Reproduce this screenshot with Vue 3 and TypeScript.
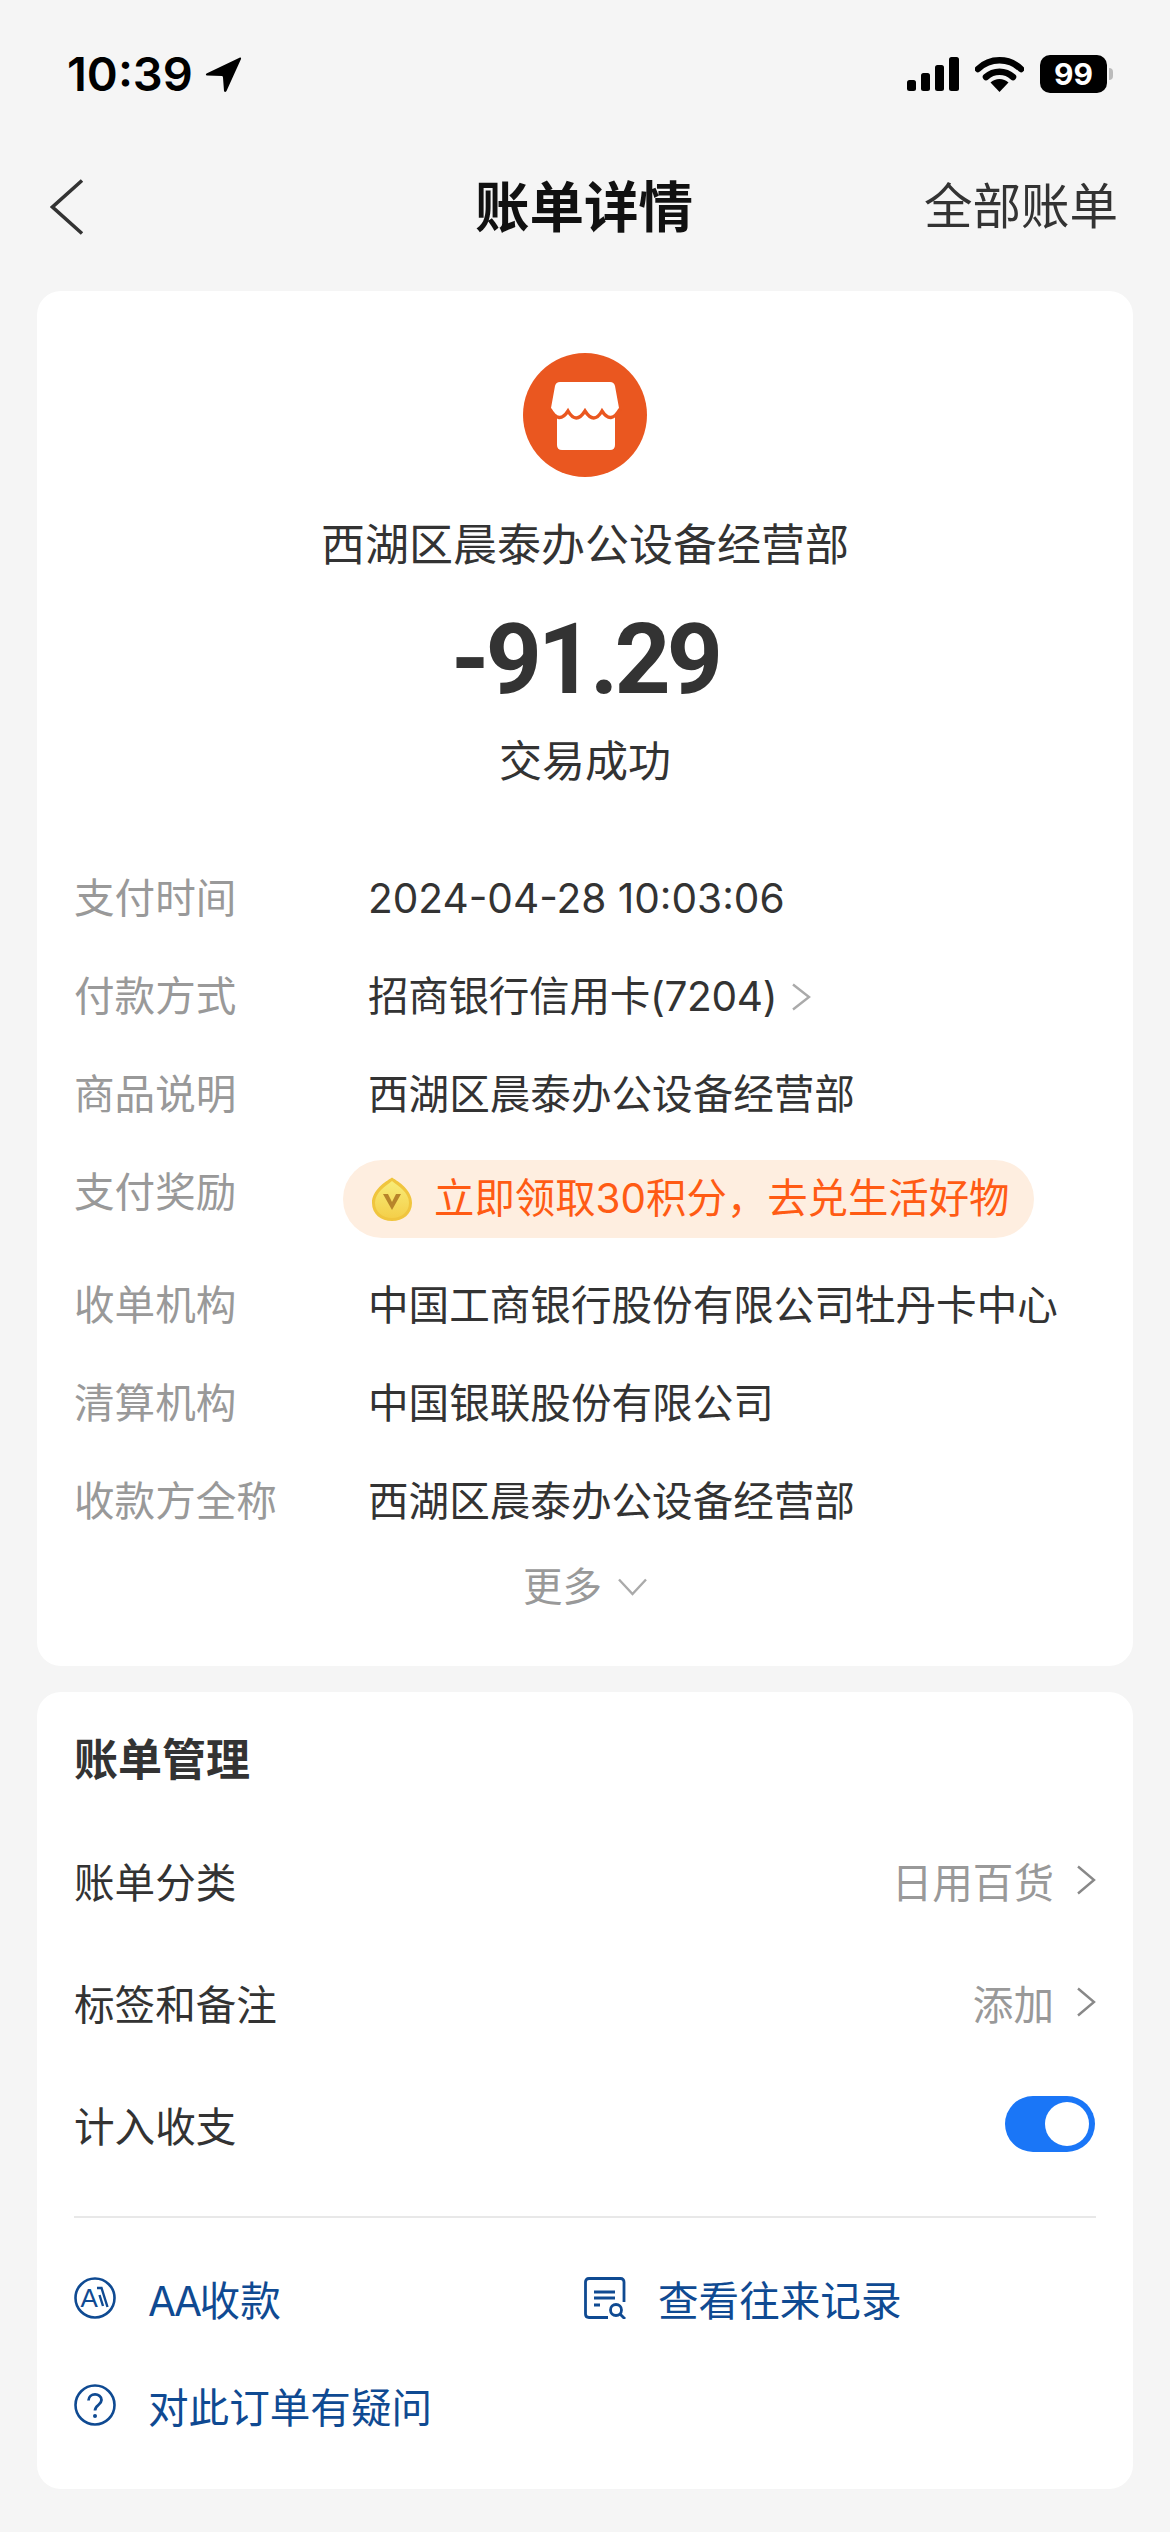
<script setup lang="ts">
interface Row { label: string; value: string; arrow?: boolean }
const topRows: Row[] = [
  { label: '支付时间', value: '2024-04-28 10:03:06' },
  { label: '付款方式', value: '招商银行信用卡(7204)', arrow: true },
  { label: '商品说明', value: '西湖区晨泰办公设备经营部' },
]
const bottomRows: Row[] = [
  { label: '收单机构', value: '中国工商银行股份有限公司牡丹卡中心' },
  { label: '清算机构', value: '中国银联股份有限公司' },
  { label: '收款方全称', value: '西湖区晨泰办公设备经营部' },
]
</script>

<template>
  <div class="page">
    <div class="status">
      <div class="status-left">
        <span class="time">10:39</span>
        <svg class="arrow" width="37" height="37" viewBox="0 0 37 37"><path d="M35 1.5 L1.5 17.5 Q0 19 2 19.5 L17 20 Q18 20 18 21.5 L19 35 Q20 37 21.500 35 L36 3 Q36.500 1 35 1.500Z" fill="#000"/></svg>
      </div>
      <div class="status-right">
        <svg width="52" height="34" viewBox="0 0 52 34"><rect x="0" y="23" width="9" height="11" rx="2.5"/><rect x="14" y="16" width="9" height="18" rx="2.5"/><rect x="28" y="8" width="9" height="26" rx="2.5"/><rect x="42" y="0" width="10" height="34" rx="2.5"/></svg>
        <svg class="wifi" width="49" height="36" viewBox="0 0 49 36"><path d="M3 13 A31 31 0 0 1 46 13" fill="none" stroke="#000" stroke-width="6.5" stroke-linecap="round"/><path d="M11 21 A20 20 0 0 1 38 21" fill="none" stroke="#000" stroke-width="6.5" stroke-linecap="round"/><path d="M24.500 36 L15.500 26.500 A13 13 0 0 1 33.500 26.500Z" fill="#000"/></svg>
        <div class="battery"><span class="battery-text">99</span></div>
        <span class="nub"></span>
      </div>
    </div>

    <div class="nav">
      <svg class="back" width="34" height="56" viewBox="0 0 34 56"><path d="M32 1.500 L2.500 28 L32 54.500" fill="none" stroke="#333" stroke-width="3.600"/></svg>
      <div class="nav-title">账单详情</div>
      <div class="nav-right">全部账单</div>
    </div>

    <section class="card summary">
      <svg class="shop" width="124" height="124" viewBox="0 0 124 124">
        <circle cx="62" cy="62" r="62" fill="#ea5720"/>
        <path d="M37 29 H87 Q91 29 92 33 L96 55 Q97 60 92 62 V92 Q92 97 87 97 H39 Q34 97 34 92 V62 Q27 60 28 55 L32 33 Q33 29 37 29Z" fill="#fff"/>
        <path d="M27 56 Q36 72 45 58 Q53 72 62 58 Q71 72 79 58 Q88 72 97 56" fill="none" stroke="#ea5720" stroke-width="3.400"/>
        <rect x="20" y="65" width="14" height="12" fill="#ea5720"/>
        <rect x="92" y="65" width="14" height="12" fill="#ea5720"/>
      </svg>
      <div class="merchant">西湖区晨泰办公设备经营部</div>
      <div class="amount">-91.29</div>
      <div class="state">交易成功</div>

      <div class="rows">
        <div v-for="r in topRows" :key="r.label" class="row">
          <span class="label">{{ r.label }}</span>
          <span class="value" :class="{ tight: r.arrow }">{{ r.value }}</span>
          <svg v-if="r.arrow" class="row-arrow" width="20" height="28" viewBox="0 0 20 28"><path d="M2 1.500 L18 14 L2 26.500" fill="none" stroke="#aaa" stroke-width="2.400"/></svg>
        </div>
        <div class="row reward-row">
          <span class="label">支付奖励</span>
          <div class="pill">
            <svg width="40" height="44" viewBox="0 0 40 44">
              <defs>
                <linearGradient id="coin" x1="0" y1="0" x2="0" y2="1">
                  <stop offset="0" stop-color="#f8ec78"/>
                  <stop offset="1" stop-color="#f4cf4a"/>
                </linearGradient>
              </defs>
              <path d="M20 0.500 C27 5 40 13 40 26 C40 37 31 44 20 44 C9 44 0 37 0 26 C0 13 13 5 20 0.500Z" fill="#f0c53e"/>
              <path d="M20 4 C26 9 37 15 37 26 C37 35 29 41 20 41 C11 41 3 35 3 26 C3 15 14 9 20 4Z" fill="url(#coin)"/>
              <path d="M11 17 L20 33 L29 17 L24 17 L20 25 L16 17Z" fill="#b8842a"/>
            </svg>
            <span class="pill-text">立即领取30积分，去兑生活好物</span>
          </div>
        </div>
        <div v-for="r in bottomRows" :key="r.label" class="row">
          <span class="label">{{ r.label }}</span>
          <span class="value">{{ r.value }}</span>
        </div>
      </div>

      <div class="more">
        <span>更多</span>
        <svg width="29" height="18" viewBox="0 0 29 18"><path d="M1 1.500 L14.500 16 L28 1.500" fill="none" stroke="#aaa" stroke-width="2.400"/></svg>
      </div>
    </section>

    <section class="card manage">
      <h2 class="manage-title">账单管理</h2>
      <div class="m-row">
        <span class="m-label">账单分类</span>
        <span class="m-value">日用百货</span>
        <svg class="m-arrow" width="20" height="30" viewBox="0 0 20 30"><path d="M2 1.500 L18 15 L2 28.500" fill="none" stroke="#888" stroke-width="2.400"/></svg>
      </div>
      <div class="m-row">
        <span class="m-label">标签和备注</span>
        <span class="m-value">添加</span>
        <svg class="m-arrow" width="20" height="30" viewBox="0 0 20 30"><path d="M2 1.500 L18 15 L2 28.500" fill="none" stroke="#888" stroke-width="2.400"/></svg>
      </div>
      <div class="m-row">
        <span class="m-label">计入收支</span>
        <div class="toggle"><span class="knob"></span></div>
      </div>
      <div class="divider"></div>
      <div class="links">
        <div class="link">
          <svg width="42" height="42" viewBox="0 0 42 42">
            <circle cx="21" cy="21" r="19.500" fill="none" stroke="#0f4a92" stroke-width="2.600"/>
            <text x="6.500" y="30" font-family="'Liberation Sans', sans-serif" font-size="26" fill="#0f4a92">A</text>
            <path d="M23 11 H27.500 L33.500 30 M25.500 18 L29 29" fill="none" stroke="#0f4a92" stroke-width="2.400"/>
          </svg>
          <span><span class="aa">AA</span>收款</span>
        </div>
        <div class="link">
          <svg width="42" height="42" viewBox="0 0 42 42">
            <path d="M40 25 V5 Q40 1.500 36.500 1.500 H5 Q1.500 1.500 1.500 5 V37 Q1.500 40.500 5 40.500 H24" fill="none" stroke="#0f4a92" stroke-width="2.800"/>
            <path d="M10 15 H31 M10 21 H31 M10 28 H16" fill="none" stroke="#0f4a92" stroke-width="2.800"/>
            <circle cx="32" cy="33" r="5.500" fill="none" stroke="#0f4a92" stroke-width="2.800"/>
            <path d="M36 37 L41 42" stroke="#0f4a92" stroke-width="2.800"/>
          </svg>
          <span>查看往来记录</span>
        </div>
        <div class="link">
          <svg width="42" height="42" viewBox="0 0 42 42">
            <circle cx="21" cy="21" r="19.500" fill="none" stroke="#0f4a92" stroke-width="2.600"/>
            <path d="M14.500 16.500 C14.500 8.500 27.500 8.500 27.500 16 C27.500 21 21 21 21 26.500" fill="none" stroke="#0f4a92" stroke-width="2.800"/>
            <circle cx="21" cy="32" r="2" fill="#0f4a92"/>
          </svg>
          <span>对此订单有疑问</span>
        </div>
      </div>
    </section>
  </div>
</template>

<style>
html, body { margin: 0; background: #f5f5f5; }
</style>

<style scoped>
.page {
  width: 1170px;
  height: 2532px;
  box-sizing: border-box;
  overflow: hidden;
  background: #f5f5f5;
  padding-top: 55px;
  font-family: "Inter", "Noto Sans CJK SC", sans-serif;
  color: #333;
}
.status {
  height: 38px;
  display: flex;
  justify-content: space-between;
  align-items: center;
  padding: 0 63px 0 67px;
}
.status-left { display: flex; align-items: center; gap: 12px; }
.time { font-size: 47px; font-weight: 600; color: #000; line-height: 38px; }
.status-right { display: flex; align-items: center; position: relative; }
.wifi { margin-left: 16px; }
.battery {
  margin-left: 16px;
  width: 67px;
  height: 38px;
  border-radius: 10px;
  background: #000;
  display: flex;
  align-items: center;
  justify-content: center;
}
.battery-text { color: #fff; font-size: 30px; font-weight: 700; line-height: 38px; font-family: "Inter", sans-serif; }
.nub { position: absolute; right: -6px; top: 13px; width: 4px; height: 12px; border-radius: 0 4px 4px 0; background: #bbb; }
.nav {
  margin-top: 79px;
  height: 70px;
  padding: 0 52px 0 50px;
  display: grid;
  grid-template-columns: 1fr auto 1fr;
  align-items: center;
}
.back { display: block; }
.nav-title { font-size: 54.500px; font-weight: 700; color: #111; line-height: 70px; }
.nav-right { justify-self: end; font-size: 48.500px; color: #333; line-height: 70px; }
.card {
  margin: 0 37px;
  background: #fff;
  border-radius: 24px;
}
.summary {
  margin-top: 49px;
  height: 1375px;
  box-sizing: border-box;
  padding-top: 62px;
  display: flex;
  flex-direction: column;
  align-items: center;
}
.shop { display: block; flex: none; }
.merchant { margin-top: 38px; font-size: 44px; line-height: 60px; }
.amount { margin-top: 29px; font-size: 98px; line-height: 112px; font-weight: 700; font-family: "Roboto", sans-serif; color: #333; letter-spacing: -4px; }
.state { margin-top: 15px; font-size: 43px; line-height: 60px; }
.rows {
  align-self: stretch;
  margin-top: 79px;
  padding-left: 37px;
  display: flex;
  flex-direction: column;
  gap: 40px;
}
.row { display: flex; align-items: center; height: 58px; font-size: 40.600px; line-height: 58px; }
.label { width: 294px; flex: none; color: #999; }
.value { color: #333; white-space: nowrap; }
.tight { letter-spacing: -0.3px; }
.row-arrow { margin-left: 14px; }
.reward-row { height: 76px; align-items: flex-start; margin-bottom: -3px; }
.pill {
  margin: -4px 0 0 -25px;
  height: 78px;
  width: 691px;
  box-sizing: border-box;
  border-radius: 39px;
  background: #feeee0;
  display: flex;
  align-items: center;
  padding-left: 29px;
  gap: 22px;
}
.pill-text { color: #ff5b14; font-size: 40.400px; white-space: nowrap; }
.more {
  margin-top: 28px;
  display: flex;
  align-items: center;
  gap: 16px;
  color: #999;
  font-size: 39.500px;
  line-height: 56px;
}
.manage {
  margin-top: 26px;
  height: 797px;
  box-sizing: border-box;
  padding: 38px 37px 0;
}
.manage-title { margin: 0; font-size: 44px; font-weight: 700; line-height: 60px; color: #333; }
.m-row { margin-top: 62px; height: 60px; display: flex; align-items: center; font-size: 40.600px; }
.manage-title + .m-row { margin-top: 60px; }
.m-label { flex: 1; color: #333; }
.m-value { color: #999; }
.m-arrow { margin-left: 22px; }
.toggle {
  width: 90px;
  height: 56px;
  border-radius: 28px;
  background: #1a76f7;
  position: relative;
  margin-right: 1px;
}
.knob {
  position: absolute;
  right: 6px;
  top: 6px;
  width: 44px;
  height: 44px;
  border-radius: 50%;
  background: #fff;
}
.divider { margin-top: 62px; height: 2px; background: #e8e8e8; }
.links {
  margin-top: 51px;
  display: grid;
  grid-template-columns: 510px 1fr;
  row-gap: 49px;
}
.link { display: flex; align-items: center; gap: 32px; height: 58px; font-size: 40.600px; color: #0f4a92; }
.aa { letter-spacing: -2.500px; }
</style>
